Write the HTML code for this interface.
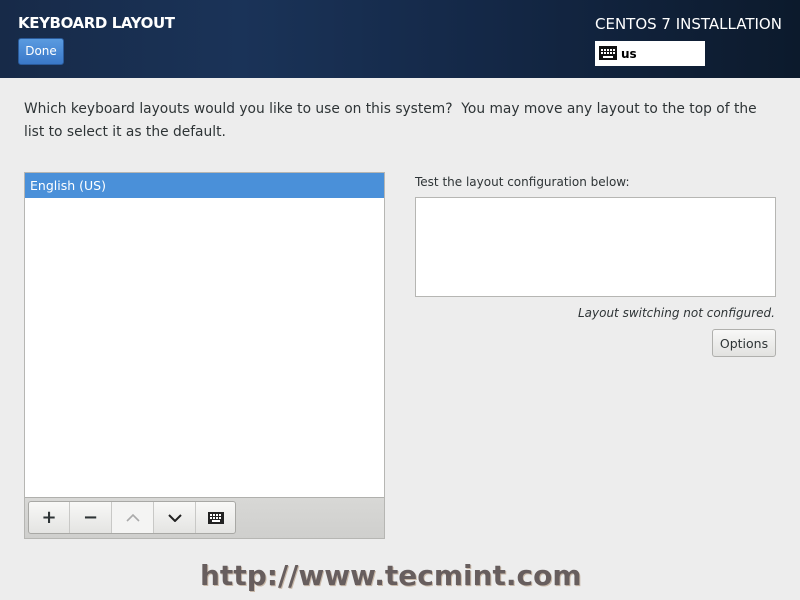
<!DOCTYPE html>
<html><head><meta charset="utf-8"><style>
*{margin:0;padding:0;box-sizing:border-box}
body{width:800px;height:600px;overflow:hidden;background:#ededed;font-family:"DejaVu Sans","Liberation Sans",sans-serif;color:#2e3436;position:relative}
.hdr{position:absolute;left:0;top:0;width:800px;height:78px;background:linear-gradient(90deg,#172a48 0%,#1a3358 30%,#142847 60%,#0c1a2c 100%)}
.abs{position:absolute}
</style></head><body>
<div class="hdr"></div>
<div class="abs" style="left:18px;top:14px;color:#fff;font-size:15px;font-weight:bold;letter-spacing:-0.4px">KEYBOARD LAYOUT</div>
<div class="abs" style="left:18px;top:38px;width:46px;height:27px;background:linear-gradient(#5a9be0,#3a78c8);border:1px solid #2a5a9a;border-radius:3px;color:#fff;font-size:12px;line-height:25px;text-align:center">Done</div>
<div class="abs" style="left:595px;top:15px;color:#fff;font-size:15px;letter-spacing:0px">CENTOS 7 INSTALLATION</div>
<div class="abs" style="left:595px;top:41px;width:110px;height:25px;background:#fff"></div>
<svg class="abs" style="left:599px;top:46px" width="18" height="14" viewBox="0 0 18 14"><rect width="18" height="14" fill="#111"/><g fill="#fff"><rect x="2" y="3" width="2" height="2"/><rect x="5" y="3" width="2" height="2"/><rect x="8" y="3" width="2" height="2"/><rect x="11" y="3" width="2" height="2"/><rect x="14" y="3" width="2" height="2"/><rect x="2" y="6" width="2" height="2"/><rect x="5" y="6" width="2" height="2"/><rect x="8" y="6" width="2" height="2"/><rect x="11" y="6" width="2" height="2"/><rect x="14" y="6" width="2" height="2"/><rect x="4" y="10" width="10" height="2"/></g></svg>
<div class="abs" style="left:621px;top:47px;font-size:12px;font-weight:bold;color:#000">us</div>
<div class="abs" style="left:24px;top:98px;width:745px;font-size:13.8px;line-height:23px;color:#2e3436">Which keyboard layouts would you like to use on this system?&nbsp; You may move any layout to the top of the list to select it as the default.</div>
<div class="abs" style="left:24px;top:172px;width:361px;height:367px;border:1px solid #b6b6b3;background:#fff"></div>
<div class="abs" style="left:25px;top:173px;width:359px;height:25px;background:#4a90d9;color:#fff;font-size:12.5px;line-height:25px;padding-left:5px">English (US)</div>
<div class="abs" style="left:25px;top:497px;width:359px;height:41px;background:linear-gradient(#d8d8d6,#cfcfcd);border-top:1px solid #b0b0ad"></div>
<div class="abs" style="left:28px;top:501px;width:208px;height:33px;border:1px solid #a8a8a5;border-radius:3px;background:linear-gradient(#f8f8f7,#e4e4e2);display:flex">
<div style="width:41px;border-right:1px solid #c8c8c6;text-align:center;font-size:18px;font-weight:bold;line-height:31px">+</div>
<div style="width:42px;border-right:1px solid #c8c8c6;text-align:center;font-size:18px;font-weight:bold;line-height:31px">−</div>
<div style="width:42px;border-right:1px solid #c8c8c6;background:#f4f4f3;display:flex;align-items:center;justify-content:center"><svg width="14" height="8"><path d="M1 7L7 1L13 7" stroke="#aaa" stroke-width="1.6" fill="none"/></svg></div>
<div style="width:42px;border-right:1px solid #c8c8c6;display:flex;align-items:center;justify-content:center"><svg width="14" height="8"><path d="M1 1L7 7L13 1" stroke="#222" stroke-width="2" fill="none"/></svg></div>
<div style="flex:1;display:flex;align-items:center;justify-content:center"><svg width="16" height="12" viewBox="0 0 16 12"><rect width="16" height="12" fill="#222"/><g fill="#fff"><rect x="2" y="2" width="2" height="2"/><rect x="5" y="2" width="2" height="2"/><rect x="8" y="2" width="2" height="2"/><rect x="11" y="2" width="2" height="2"/><rect x="2" y="5" width="2" height="2"/><rect x="5" y="5" width="2" height="2"/><rect x="8" y="5" width="2" height="2"/><rect x="11" y="5" width="2" height="2"/><rect x="4" y="8" width="8" height="2"/></g></svg></div>
</div>
<div class="abs" style="left:415px;top:175px;font-size:12px;color:#2e3436">Test the layout configuration below:</div>
<div class="abs" style="left:415px;top:197px;width:361px;height:100px;border:1px solid #b6b6b3;background:#fff"></div>
<div class="abs" style="left:500px;top:306px;width:275px;text-align:right;font-size:12px;font-style:italic;color:#2e3436">Layout switching not configured.</div>
<div class="abs" style="left:712px;top:329px;width:64px;height:28px;border:1px solid #b0b0ad;border-radius:3px;background:linear-gradient(#f8f8f7,#e2e2e0);font-size:12.5px;line-height:28px;text-align:center">Options</div>
<div class="abs" style="left:200px;top:559px;font-size:28px;font-weight:bold;color:#675e5e;text-shadow:1px 1px 0 #c8b8a8">http://www.tecmint.com</div>
</body></html>
